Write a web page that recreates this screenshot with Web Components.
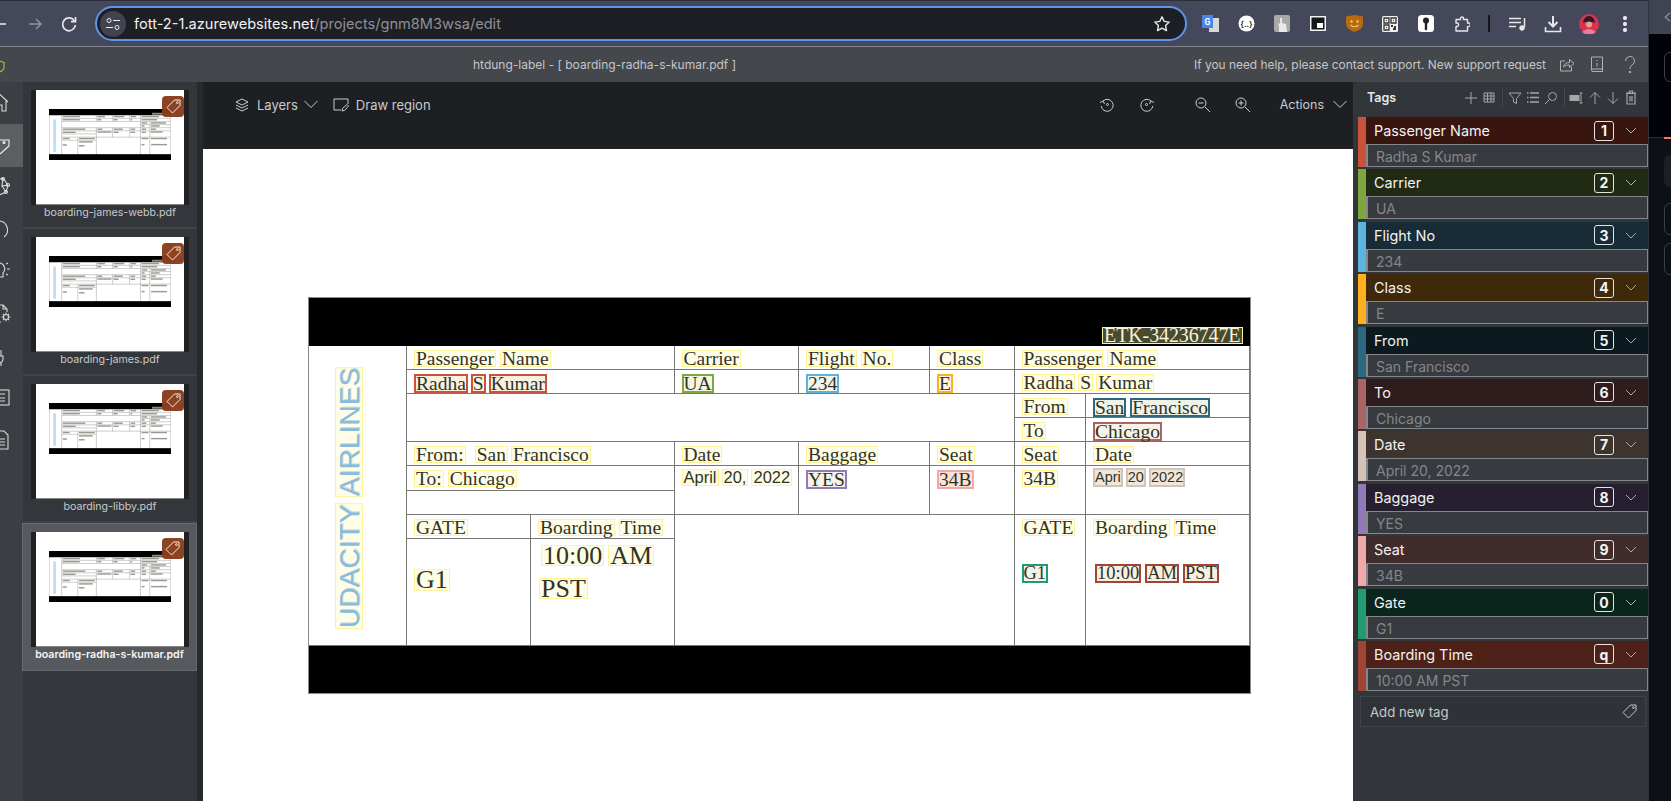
<!DOCTYPE html>
<html>
<head>
<meta charset="utf-8">
<title>fott</title>
<style>
html, body { margin: 0; padding: 0; width: 1671px; height: 801px; overflow: hidden; background: #0d1117; font-family: Inter, "Liberation Sans", sans-serif; }
.root { display: flex; width: 1671px; height: 801px; }
.win { display: flex; flex-direction: column; width: 1648px; flex: none; }
.work { display: flex; height: 719px; }
.thumbs { display: flex; flex-direction: column; width: 174px; background: #33363b; flex: none; }
.strip { width: 6px; background: #26292d; flex: none; }
.main { display: flex; flex-direction: column; width: 1150px; flex: none; }
.canvas { flex: 1; background: #fff; padding: 148px 0 0 105px; overflow: hidden; }
.vert { display: flex; writing-mode: vertical-rl; transform: rotate(180deg); gap: 6px; }
.line { display: flex; gap: 4px; }
.t { font-size: 18.5px; }
</style>
</head>
<body>
<div class="root">
	<div class="win">
		<browser-bar></browser-bar>
		<title-bar></title-bar>
		<div class="work">
			<left-nav></left-nav>
			<div class="thumbs">
				<thumb-card>boarding-james-webb.pdf</thumb-card>
				<thumb-card>boarding-james.pdf</thumb-card>
				<thumb-card>boarding-libby.pdf</thumb-card>
				<thumb-card selected>boarding-radha-s-kumar.pdf</thumb-card>
			</div>
			<div class="strip"></div>
			<div class="main">
				<editor-toolbar></editor-toolbar>
				<div class="canvas">
					<doc-sheet>
						<doc-cell black style="grid-area:1/1/2/9;justify-content:flex-end;padding:29px 7px 0 0"><doc-word style="color:#f4f4d8;background:#4a4a30;font-size:20px;letter-spacing:-.1px">ETK-34236747E</doc-word></doc-cell>
						<doc-cell style="grid-area:2/1/11/2;padding:21px 0 0 26px"><div class="vert" style="font:28.2px/27px 'Liberation Sans',sans-serif;color:#8abbd8;text-shadow:1px 1px 0 #c4dbe6"><doc-word style="--lh:26px;padding:0">UDACITY</doc-word><doc-word style="--lh:26px;padding:0">AIRLINES</doc-word></div></doc-cell>

						<doc-cell style="grid-area:2/2/3/4"><doc-word>Passenger</doc-word><doc-word>Name</doc-word></doc-cell>
						<doc-cell style="grid-area:2/4/3/5"><doc-word>Carrier</doc-word></doc-cell>
						<doc-cell style="grid-area:2/5/3/6"><doc-word>Flight</doc-word><doc-word>No.</doc-word></doc-cell>
						<doc-cell style="grid-area:2/6/3/7"><doc-word>Class</doc-word></doc-cell>
						<doc-cell style="grid-area:2/7/3/9"><doc-word>Passenger</doc-word><doc-word>Name</doc-word></doc-cell>

						<doc-cell style="grid-area:3/2/4/4;gap:3px"><doc-word c="#c9533a">Radha</doc-word><doc-word c="#c9533a">S</doc-word><doc-word c="#c9533a">Kumar</doc-word></doc-cell>
						<doc-cell style="grid-area:3/4/4/5"><doc-word c="#7fa63f">UA</doc-word></doc-cell>
						<doc-cell style="grid-area:3/5/4/6"><doc-word c="#5cb3e0">234</doc-word></doc-cell>
						<doc-cell style="grid-area:3/6/4/7"><doc-word c="#ffb01f">E</doc-word></doc-cell>
						<doc-cell style="grid-area:3/7/4/9;gap:3px"><doc-word>Radha</doc-word><doc-word>S</doc-word><doc-word>Kumar</doc-word></doc-cell>

						<doc-cell style="grid-area:4/2/6/7"></doc-cell>
						<doc-cell style="grid-area:4/7/5/8"><doc-word>From</doc-word></doc-cell>
						<doc-cell style="grid-area:4/8/5/9"><doc-word c="#2c6880">San</doc-word><doc-word c="#2c6880">Francisco</doc-word></doc-cell>
						<doc-cell style="grid-area:5/7/6/8"><doc-word>To</doc-word></doc-cell>
						<doc-cell style="grid-area:5/8/6/9"><doc-word c="#ab6464">Chicago</doc-word></doc-cell>

						<doc-cell style="grid-area:6/2/7/4;gap:3px"><doc-word>From:</doc-word><doc-word style="margin-left:6px">San</doc-word><doc-word>Francisco</doc-word></doc-cell>
						<doc-cell style="grid-area:6/4/7/5"><doc-word>Date</doc-word></doc-cell>
						<doc-cell style="grid-area:6/5/7/6"><doc-word>Baggage</doc-word></doc-cell>
						<doc-cell style="grid-area:6/6/7/7"><doc-word>Seat</doc-word></doc-cell>
						<doc-cell style="grid-area:6/7/7/8"><doc-word>Seat</doc-word></doc-cell>
						<doc-cell style="grid-area:6/8/7/9"><doc-word>Date</doc-word></doc-cell>

						<doc-cell style="grid-area:7/2/8/4"><doc-word>To:</doc-word><doc-word>Chicago</doc-word></doc-cell>
						<doc-cell style="grid-area:8/2/9/4"></doc-cell>
						<doc-cell style="grid-area:7/4/9/5;font:16.5px 'Liberation Sans',sans-serif;padding-top:3px;gap:3px"><doc-word>April</doc-word><doc-word>20,</doc-word><doc-word>2022</doc-word></doc-cell>
						<doc-cell style="grid-area:7/5/9/6"><doc-word c="#9279b8">YES</doc-word></doc-cell>
						<doc-cell style="grid-area:7/6/9/7"><doc-word c="#f0a8a8" style="--mix:30%">34B</doc-word></doc-cell>
						<doc-cell style="grid-area:7/7/9/8"><doc-word>34B</doc-word></doc-cell>
						<doc-cell style="grid-area:7/8/9/9;font:14.5px 'Liberation Sans',sans-serif;padding-top:2px;gap:3px"><doc-word c="#d5c3b8" style="--mix:35%">Apri</doc-word><doc-word c="#d5c3b8" style="--mix:35%">20</doc-word><doc-word c="#d5c3b8" style="--mix:35%">2022</doc-word></doc-cell>

						<doc-cell style="grid-area:9/2/10/3"><doc-word>GATE</doc-word></doc-cell>
						<doc-cell style="grid-area:9/3/10/4"><doc-word>Boarding</doc-word><doc-word>Time</doc-word></doc-cell>
						<doc-cell style="grid-area:10/2/11/3;font-size:26px;padding-top:30px"><doc-word style="--lh:20px">G1</doc-word></doc-cell>
						<doc-cell style="grid-area:10/3/11/4;font-size:26px;flex-wrap:wrap;align-content:flex-start;row-gap:12px;padding:6px 0 0 8px"><doc-word style="--lh:19px;margin-left:2px">10:00</doc-word><doc-word style="--lh:19px">AM</doc-word><doc-word style="--lh:19px">PST</doc-word></doc-cell>
						<doc-cell style="grid-area:9/4/11/7"></doc-cell>
						<doc-cell style="grid-area:9/7/11/8;flex-direction:column;align-items:flex-start;gap:28px"><doc-word>GATE</doc-word><doc-word c="#229a72" class="t">G1</doc-word></doc-cell>
						<doc-cell style="grid-area:9/8/11/9;flex-direction:column;gap:28px">
							<div class="line"><doc-word>Boarding</doc-word><doc-word>Time</doc-word></div>
							<div class="line" style="margin-left:2px"><doc-word c="#9f4535" class="t">10:00</doc-word><doc-word c="#9f4535" class="t">AM</doc-word><doc-word c="#9f4535" class="t">PST</doc-word></div>
						</doc-cell>
						<doc-cell black style="grid-area:11/1/12/9"></doc-cell>
					</doc-sheet>
				</div>
			</div>
			<tag-panel>
				<tag-item color="#c9533a" head="#38150f" key="1" value="Radha S Kumar">Passenger Name</tag-item>
				<tag-item color="#7fa63f" head="#212a12" key="2" value="UA">Carrier</tag-item>
				<tag-item color="#5cb3e0" head="#182c38" key="3" value="234">Flight No</tag-item>
				<tag-item color="#ffb01f" head="#40290b" key="4" value="E">Class</tag-item>
				<tag-item color="#2c6880" head="#0b1a1e" key="5" value="San Francisco">From</tag-item>
				<tag-item color="#ab6464" head="#2f1c1c" key="6" value="Chicago">To</tag-item>
				<tag-item color="#d5c3b8" head="#3d3430" key="7" value="April 20, 2022">Date</tag-item>
				<tag-item color="#9279b8" head="#261f30" key="8" value="YES">Baggage</tag-item>
				<tag-item color="#f0a8a8" head="#412c2c" key="9" value="34B">Seat</tag-item>
				<tag-item color="#229a72" head="#0a261c" key="0" value="G1">Gate</tag-item>
				<tag-item color="#9f4535" head="#4d2018" key="q" value="10:00 AM PST">Boarding Time</tag-item>
			</tag-panel>
		</div>
	</div>
	<side-window></side-window>
</div>

<script>
// small icon helper, all icons are stroke based unless the body says otherwise
const icon = (w, h, body, extra = '') =>
	`<svg width="${w}" height="${h}" viewBox="0 0 ${w} ${h}" fill="none" stroke="currentColor" stroke-width="1" ${extra}>${body}</svg>`

const TAG_SHAPE = '<path d="M3 10.5 10.5 3H16v5.5L8.5 16Z" stroke-linejoin="round"/><circle cx="13.4" cy="5.6" r=".9"/>'

// thumbnail drawing, same coordinates as the real sheet, then scaled
const MINI_BLOBS = [[106,53,134],[105,77,132],[373,53,58],[498,53,82],[629,53,43],[373,77,30],[497,77,32],[628,77,13],[713,53,135],[713,77,120],[713,102,45],[786,102,115],[713,125,23],[785,125,68],[106,150,174],[106,174,100],[373,150,38],[498,150,71],[629,150,35],[714,150,35],[785,150,38],[373,172,108],[497,174,39],[628,174,35],[714,174,32],[785,172,90],[106,222,53],[231,222,122],[106,272,32],[232,248,105],[231,278,43],[713,222,54],[785,222,124],[713,269,23],[787,269,123]]
const MINI_LINES = ['98 72H940','98 96H940','705 120H940','98 144H940','98 168H940','98 192H365','98 217H940','98 241H365','98 48V348','365 48V96','365 144V348','490 48V96','490 144V217','621 48V96','621 144V217','705 48V348','777 96V348','222 217V348']
const MINI_DOC = `<svg viewBox="0 0 940 396" width="122" height="51.4" style="display:block">
	<rect x="1" y="1" width="938" height="394" fill="#fff" stroke="#aaa" stroke-width="4"/>
	<path d="${MINI_LINES.map(l => 'M' + l).join('')}" stroke="#a0a0a0" stroke-width="4"/>
	${MINI_BLOBS.map(b => `<rect x="${b[0]}" y="${b[1]}" width="${b[2]}" height="11" fill="#9a9a90"/>`).join('')}
	<rect x="34" y="80" width="18" height="250" fill="#b5d8ee"/>
	<rect width="940" height="48" fill="#000"/><rect y="348" width="940" height="48" fill="#000"/>
	<rect x="793" y="29" width="140" height="15" fill="#8a8a78"/>
</svg>`

class BrowserBar extends HTMLElement {
	constructor() {
		super()
		this.attachShadow({ mode: 'open' })
		this.shadowRoot.innerHTML = `
			<style>
				:host { display: flex; align-items: center; height: 47px; box-sizing: border-box; background: #45485a; border-top: 1px solid #2b2d38; border-bottom: 1px solid #82848c; color: #e6e7ea; flex: none; }
				.back { width: 6px; overflow: hidden; flex: none; display: flex; }
				.fwd { margin-left: 21px; color: #8f919c; display: flex; }
				.reload { margin-left: 17px; display: flex; }
				.omni { display: flex; align-items: center; box-sizing: border-box; width: 1092px; height: 35px; margin-left: 17px; border: 2px solid #5f94e6; border-radius: 18px; background: #1e1f24; padding: 0 14px 0 3px; flex: none; }
				.site { width: 26px; height: 26px; border-radius: 50%; background: #41434f; display: flex; align-items: center; justify-content: center; flex: none; color: #eee; }
				.url { margin-left: 8px; font-size: 14.6px; color: #f0f0f2; flex: 1; white-space: nowrap; }
				.url span { color: #8f9096; }
				.star { display: flex; }
				.exts { display: flex; margin-left: 5px; }
				.e { width: 36px; height: 24px; display: flex; align-items: center; justify-content: center; flex: none; }
				.sep { width: 2px; height: 17px; background: #15161c; margin: 0 9px 0 8px; flex: none; }
			</style>
			<div class="back">${icon(6, 16, '<path d="M0 8H6" stroke-width="1.6"/>')}</div>
			<div class="fwd">${icon(16, 16, '<path d="M2 8H14M9 3l5 5-5 5" stroke-width="1.5"/>')}</div>
			<div class="reload">${icon(18, 18, '<path d="M14.5 6A6.4 6.4 0 1 0 15.4 10" stroke-width="1.7"/><path d="M15.5 2v4.6H11" stroke-width="1.7"/>')}</div>
			<div class="omni">
				<div class="site">${icon(16, 14, '<circle cx="4" cy="3.5" r="2"/><path d="M8 3.5H15M1 10.5H8"/><circle cx="12" cy="10.5" r="2"/>', 'stroke-width="1.4"')}</div>
				<div class="url">fott-2-1.azurewebsites.net<span>/projects/gnm8M3wsa/edit</span></div>
				<div class="star">${icon(18, 18, '<path d="M9 1.8l2.2 4.6 5 .7-3.6 3.5.9 5L9 13.2l-4.5 2.4.9-5L1.800 7.100l5-.7Z" stroke-width="1.4" stroke-linejoin="round"/>')}</div>
			</div>
			<div class="exts">
				<div class="e"><svg width="17" height="17" viewBox="0 0 17 17"><rect x="7" y="3" width="10" height="14" fill="#d8d8d8"/><rect x="0" y="0" width="11" height="13" fill="#4a86e8"/><text x="5.500" y="9.500" font-family="Roboto,sans-serif" font-size="8.500" font-weight="700" fill="#fff" text-anchor="middle">G</text></svg></div>
				<div class="e"><svg width="17" height="17" viewBox="0 0 17 17"><circle cx="8.500" cy="8.500" r="8" fill="#fff"/><text x="8.500" y="11.500" font-family="Inter,sans-serif" font-size="8" font-weight="600" fill="#222" text-anchor="middle">{..}</text></svg></div>
				<div class="e"><svg width="16" height="17" viewBox="0 0 16 17"><rect width="16" height="17" rx="2" fill="#a8a8a8"/><path d="M5 17V12L4 8l2 1V3h2v5l4 1 1 8Z" fill="#e8e8e8"/></svg></div>
				<div class="e"><svg width="16" height="15" viewBox="0 0 16 15"><rect x=".75" y=".75" width="14.500" height="13.500" fill="#15161a" stroke="#f2f2f2" stroke-width="1.500"/><rect x="7" y="7" width="6" height="5" fill="#fff"/></svg></div>
				<div class="e"><svg width="17" height="17" viewBox="0 0 17 17"><path d="M0 1.500 8.500 0 17 1.500V9c0 3.500-3.500 6.500-8.500 8C3.500 15.500 0 12.500 0 9Z" fill="#b86a12"/><circle cx="5.500" cy="6.500" r="1.200" fill="#f6c96a"/><circle cx="11.500" cy="6.500" r="1.200" fill="#f6c96a"/><path d="M4.500 10q4 3.500 8 0" stroke="#f6c96a" stroke-width="1.200" fill="none"/></svg></div>
				<div class="e"><svg width="16" height="16" viewBox="0 0 16 16"><rect width="16" height="16" rx="1.500" fill="#f0f0f0"/><path d="M2 2h5v5H2ZM9 2h5v5H9ZM2 9h5v5H2Z" fill="none" stroke="#333" stroke-width="1.300"/><path d="M4 4h1v1H4ZM11 4h1v1h-1ZM4 11h1v1H4ZM9 9h2v2H9ZM12 10h2v4h-3v-2h1Z" fill="#333"/></svg></div>
				<div class="e"><svg width="16" height="17" viewBox="0 0 16 17"><rect width="16" height="17" rx="3.500" fill="#fff"/><circle cx="8" cy="5.500" r="3" fill="#222"/><path d="M6.800 7h2.400v7.500L8 15.500l-1.200-1Z" fill="#222"/></svg></div>
				<div class="e">${icon(16, 16, '<path d="M2 3.500H6.500V2.500a1.500 1.500 0 0 1 3 0V3.500H13.500V7h1a1.800 1.800 0 0 1 0 3.600h-1V15H2V10.500h1.200a1.800 1.800 0 0 0 0-3.500H2Z" stroke-width="1.400" stroke-linejoin="round"/>')}</div>
			</div>
			<div class="sep"></div>
			<div class="e" style="width:36px">${icon(17, 14, '<path d="M0 1.500H12M0 5.500H12M0 9.500H7" stroke-width="1.500"/><path d="M15.500 1V10" stroke-width="1.500"/><circle cx="13" cy="11" r="2.300" fill="currentColor"/>')}</div>
			<div class="e" style="width:36px">${icon(18, 18, '<path d="M9 1V11M4.500 7 9 11.500 13.500 7" stroke-width="2"/><path d="M1.500 12V16.500H16.500V12" stroke-width="1.600"/>')}</div>
			<div class="e" style="width:36px"><svg width="20" height="20" viewBox="0 0 20 20"><circle cx="10" cy="10" r="10" fill="#d8334f"/><path d="M4 9Q5 2 10 2T16 9L14 8H6Z" fill="#2a1a28"/><circle cx="10" cy="10.500" r="3" fill="#e8a090"/><path d="M3 18q7-6 14 0l-3 2H6Z" fill="#f07a9a"/></svg></div>
			<div class="e" style="width:36px">${icon(4, 16, '<circle cx="2" cy="2" r="1.700" fill="currentColor"/><circle cx="2" cy="8" r="1.700" fill="currentColor"/><circle cx="2" cy="14" r="1.700" fill="currentColor"/>', 'stroke="none"')}</div>
		`
	}
}
customElements.define('browser-bar', BrowserBar)

class TitleBar extends HTMLElement {
	constructor() {
		super()
		this.attachShadow({ mode: 'open' })
		this.shadowRoot.innerHTML = `
			<style>
				:host { display: flex; align-items: center; height: 35px; background: #44474c; color: #c4c6c8; font-size: 12px; flex: none; position: relative; }
				.shield { position: absolute; left: -6px; top: 13px; color: #8fc31f; }
				.name { margin-left: 473px; }
				.help { margin-left: auto; font-size: 11.900px; }
				.i { display: flex; color: #b0b2b4; }
			</style>
			<div class="shield">${icon(11, 13, '<path d="M5.500 1 10 2.500V7c0 2.500-2 4-4.500 5C3 11 1 9.500 1 7V2.500Z" stroke-width="1.300"/>')}</div>
			<div class="name">htdung-label - [ boarding-radha-s-kumar.pdf ]</div>
			<div class="help">If you need help, please contact support. New support request</div>
			<div class="i" style="margin-left:13px">${icon(16, 15, '<path d="M6 4H1.500V14H12.500V10" /><path d="M4.500 10C5 7 7.500 5.500 10.500 5.500V2.500L15 6.500 10.500 10.500V8C8 8 6 8.500 4.500 10Z" stroke-linejoin="round"/>')}</div>
			<div class="i" style="margin-left:15px">${icon(14, 17, '<path d="M1.500 13.500V1H12.500V15.500H3A1.500 1.500 0 0 1 1.500 14Q1.500 13 3 13H12.500"/><path d="M7 4V5M7 7V10.500"/>')}</div>
			<div class="i" style="margin-left:20px;margin-right:12px">${icon(12, 18, '<path d="M1.500 5A4.500 4.500 0 1 1 8 9Q6 10 6 13"/><circle cx="6" cy="16" r=".8" fill="currentColor"/>')}</div>
		`
	}
}
customElements.define('title-bar', TitleBar)

class LeftNav extends HTMLElement {
	constructor() {
		super()
		this.attachShadow({ mode: 'open' })
		// the page is scrolled sideways in the shot, so only the right part of each icon shows
		const items = [
			'<path d="M-8 11 0 3.500 8 11M6 10V20H2V14H-2V20"/>',
			'<path d="M-8 6H9V12L0 20"/><circle cx="4" cy="8.500" r="1"/>',
			'<path d="M-3 4 3 2 8 9 6 16 -3 20M3 2 2 10 8 9M2 10 6 16" /><circle cx="3" cy="3" r="1.500"/><circle cx="8" cy="9" r="1.500"/><circle cx="6" cy="16" r="1.500"/>',
			'<path d="M0 3A9 9 0 0 1 4 19"/>',
			'<path d="M0 3A6 6 0 0 1 3 13V17H0M6 4 8 3M7 9H10M6 14 8 15"/>',
			'<path d="M-3 3H3L7 7V10M7 7H3V3M-3 3V20H1"/><circle cx="6" cy="15" r="2.500"/><path d="M6 10.500V12M6 18V19.500M10.500 15H9M3 15H1.500M9 12 8 13M4 17 3 18M9 18 8 17M4 13 3 12"/>',
			'<path d="M-5 12H3V15A4 4 0 0 1 -1 19M1 6V12M1 19V22" />',
			'<rect x="-8" y="4" width="17" height="15"/><path d="M-2 8H5M-2 12H5M-2 15H5"/>',
			'<path d="M-6 3H4L8 7V21H-6ZM-2 11H5M-2 14H5M-2 17H5"/>'
		]
		this.shadowRoot.innerHTML = `
			<style>
				:host { display: flex; flex-direction: column; width: 23px; background: #3b3e42; color: #d8dadc; flex: none; }
				.n { height: 42px; display: flex; align-items: center; }
				.n.on { background: #5c5e62; color: #f2f2f2; height: 43px; }
				svg { overflow: hidden; }
			</style>
			${items.map((d, i) => `<div class="n${i == 1 ? ' on' : ''}"><svg width="23" height="24" viewBox="0 0 23 24" fill="none" stroke="currentColor" stroke-width="1.100">${d}</svg></div>`).join('')}
		`
	}
}
customElements.define('left-nav', LeftNav)

class ThumbCard extends HTMLElement {
	constructor() {
		super()
		this.attachShadow({ mode: 'open' })
		this.shadowRoot.innerHTML = `
			<style>
				:host { display: flex; flex-direction: column; align-items: center; box-sizing: border-box; height: 147px; padding-top: 8px; border-bottom: 2px solid #404347; color: #c8cacc; font-size: 10.650px; flex: none; }
				:host([selected]) { background: #56595d; border: 1px solid #66696d; color: #f4f4f4; font-weight: 600; height: 148px; margin-left: -1px; }
				.frame { position: relative; box-sizing: border-box; width: 158px; height: 115px; background: #1f2123; padding: 0 5px; flex: none; }
				.page { height: 115px; background: #fff; padding: 19px 0 0 13px; box-sizing: border-box; border-bottom: 1px solid #888; }
				.badge { position: absolute; right: 5px; top: 6px; width: 22px; height: 21px; border-radius: 4px; background: #8a3c1a; color: #f4eee8; display: flex; align-items: center; justify-content: center; opacity: .97; }
				.label { line-height: 16px; white-space: nowrap; }
			</style>
			<div class="frame">
				<div class="page">${MINI_DOC}</div>
				<div class="badge">${icon(19, 19, TAG_SHAPE)}</div>
			</div>
			<div class="label"><slot></slot></div>
		`
	}
}
customElements.define('thumb-card', ThumbCard)

class EditorToolbar extends HTMLElement {
	constructor() {
		super()
		this.attachShadow({ mode: 'open' })
		const chev = icon(16, 9, '<path d="M1.500 1 8 7.500 14.500 1"/>')
		this.shadowRoot.innerHTML = `
			<style>
				:host { display: flex; height: 67px; padding: 6px 0 0 32px; box-sizing: border-box; background: #1d1f23; color: #c9cbcd; font-size: 13px; flex: none; }
				.r { display: flex; align-items: center; height: 33px; }
				.i { display: flex; }
			</style>
			<div class="r" style="flex:1">
				<div class="i">${icon(14, 14, '<path d="M7 1 13 4 7 7 1 4ZM1 7l6 3 6-3M1 10l6 3 6-3" stroke-linejoin="round"/>')}</div>
				<span style="margin-left:8px">Layers</span>
				<div class="i" style="margin-left:5px">${chev}</div>
				<div class="i" style="margin-left:14px">${icon(16, 14, '<path d="M8 12H1V1H15V6"/><path d="M9 13 9.500 10.500 14 6.500 15.500 8 11.500 12.500Z" stroke-linejoin="round"/>')}</div>
				<span style="margin-left:7px">Draw region</span>
			</div>
			<div class="r">
				<div class="i">${icon(16, 15, '<path d="M4 4A6 6 0 1 1 2.200 9"/><path d="M1 5.500 4 4 5.500 7" /><circle cx="8.500" cy="7.500" r="1"/>')}</div>
				<div class="i" style="margin-left:24px">${icon(16, 15, '<path d="M12 4A6 6 0 1 0 13.800 9"/><path d="M15 5.500 12 4 10.500 7"/><circle cx="7.500" cy="7.500" r="1"/>')}</div>
				<div class="i" style="margin-left:40px">${icon(16, 16, '<circle cx="6" cy="6" r="5"/><path d="M10 10 15 15M3.500 6H8.500"/>')}</div>
				<div class="i" style="margin-left:24px">${icon(16, 16, '<circle cx="6" cy="6" r="5"/><path d="M10 10 15 15M3.500 6H8.500M6 3.500V8.500"/>')}</div>
				<span style="margin-left:29px;font-size:12.500px">Actions</span>
				<div class="i" style="margin-left:8px;margin-right:5px">${chev}</div>
			</div>
		`
	}
}
customElements.define('editor-toolbar', EditorToolbar)

class DocSheet extends HTMLElement {
	constructor() {
		super()
		this.attachShadow({ mode: 'open' })
		this.shadowRoot.innerHTML = `
			<style>
				:host { display: grid; width: 940.500px; border: 1px solid #8a8a8a;
					grid-template-columns: 98px 124px 143.500px 124.500px 131px 84.500px 71.500px 163.500px;
					grid-template-rows: 48px 24px 24px 24px 24px 24px 24.500px 24.500px 24px 106.500px 47.500px;
					font: 19.500px "Liberation Serif", serif; color: #33331f; background: #fff; }
			</style>
			<slot></slot>
		`
	}
}
customElements.define('doc-sheet', DocSheet)

class DocCell extends HTMLElement {
	constructor() {
		super()
		this.attachShadow({ mode: 'open' })
		this.shadowRoot.innerHTML = `
			<style>
				:host { display: flex; align-items: flex-start; gap: 4px; box-sizing: border-box; min-width: 0; padding: 4px 0 0 7px; border-right: 1.500px solid #777; border-bottom: 1.500px solid #777; }
				:host([black]) { background: #000; border: 0; }
			</style>
			<slot></slot>
		`
	}
}
customElements.define('doc-cell', DocCell)

class DocWord extends HTMLElement {
	constructor() {
		super()
		this.attachShadow({ mode: 'open' })
		this.shadowRoot.innerHTML = `
			<style>
				:host { display: inline-block; box-sizing: border-box; flex: none; white-space: nowrap; line-height: var(--lh, 15px); padding: 0 1px; border: 1px solid #fff39a; background: #fefde8; }
				:host([c]) { border: 2px solid var(--c); padding: 0; background: color-mix(in srgb, var(--c) var(--mix, 6%), #fbfbee); }
			</style>
			<slot></slot>
		`
	}
	connectedCallback() {
		const c = this.getAttribute('c')
		if (c) this.style.setProperty('--c', c)
	}
}
customElements.define('doc-word', DocWord)

class TagPanel extends HTMLElement {
	constructor() {
		super()
		this.attachShadow({ mode: 'open' })
		this.shadowRoot.innerHTML = `
			<style>
				:host { display: flex; flex-direction: column; width: 295px; box-sizing: border-box; padding-left: 5px; background: #32353a; border-left: 0; color: #e8e9ea; flex: none; }
				.head { display: flex; align-items: center; height: 35px; padding: 0 8px 4px 9px; box-sizing: border-box; flex: none; }
				.head b { font-size: 12.500px; font-weight: 600; flex: 1; }
				.i { display: flex; color: #a4a6a9; width: 18px; justify-content: center; }
				.s { width: 1px; height: 19px; background: #45484c; margin: 0 3.500px; }
				.add { display: flex; align-items: center; justify-content: space-between; box-sizing: border-box; height: 31px; margin: 3px 2px 0 2px; padding: 0 6px 0 9px; border: 1px solid #3f4246; background: #2f3237; font-size: 13.200px; color: #c8cacc; }
			</style>
			<div class="head">
				<b>Tags</b>
				<div class="i">${icon(14, 14, '<path d="M7 1V13M1 7H13"/>')}</div>
				<div class="i">${icon(13, 13, '<path d="M1 2H11V11H1ZM1 5H11M1 8H11M4.500 2V11M8 2V11"/>')}</div>
				<div class="s"></div>
				<div class="i">${icon(14, 14, '<path d="M1 2H13L8.500 7.500V12.500L5.500 11V7.500Z"/>')}</div>
				<div class="i">${icon(14, 13, '<path d="M4 2H13M4 6.500H13M4 11H13M1 2H2.500M1 6.500H2.500M1 11H2.500" stroke-width="1.500"/>')}</div>
				<div class="i">${icon(14, 14, '<circle cx="8.500" cy="5.500" r="4"/><path d="M5.500 8.500 1 13"/>')}</div>
				<div class="s"></div>
				<div class="i">${icon(16, 12, '<rect x="1" y="3.500" width="9" height="5" fill="currentColor"/><path d="M12 1V11M10.500 1H13.500M10.500 11H13.500"/>')}</div>
				<div class="i">${icon(14, 14, '<path d="M7 13V1.500M2 6.500 7 1.500 12 6.500"/>')}</div>
				<div class="i">${icon(14, 14, '<path d="M7 1V12.500M2 7.500 7 12.500 12 7.500"/>')}</div>
				<div class="i">${icon(12, 15, '<path d="M2 3.500H10V14H2ZM1 3H11M4.500 3V1H7.500V3M5 6V11.500M7 6V11.500" stroke-width="1.200"/>')}</div>
			</div>
			<slot></slot>
			<div class="add"><span>Add new tag</span>${icon(19, 19, TAG_SHAPE)}</div>
		`
	}
}
customElements.define('tag-panel', TagPanel)

class TagItem extends HTMLElement {
	constructor() {
		super()
		this.attachShadow({ mode: 'open' })
	}
	connectedCallback() {
		const color = this.getAttribute('color')
		const head = this.getAttribute('head')
		this.shadowRoot.innerHTML = `
			<style>
				:host { display: grid; grid-template-columns: 8px 1fr; grid-template-rows: 27px 23px; height: 50px; margin-bottom: 2.400px; flex: none; }
				.bar { grid-row: 1 / 3; background: ${color}; }
				.top { display: flex; align-items: center; padding: 0 11px 0 8px; background: ${head}; color: #f2f2f2; font-size: 14.400px; }
				.name { flex: 1; }
				.key { box-sizing: border-box; width: 20px; height: 20px; display: flex; align-items: center; justify-content: center; border: 1.500px solid #e4e4e4; border-radius: 3px; font-size: 14px; font-weight: 700; color: #f4f4f4; }
				.chev { display: flex; margin-left: 11px; color: #a8aaac; }
				.val { box-sizing: border-box; padding-left: 8px; background: #373a3f; border: 1px solid #85878a; border-left-width: 2px; font-size: 14px; line-height: 23.500px; color: #84878a; overflow: hidden; }
			</style>
			<div class="bar"></div>
			<div class="top">
				<div class="name"><slot></slot></div>
				<div class="key">${this.getAttribute('key')}</div>
				<div class="chev">${icon(12, 7, '<path d="M1 1 6 6 11 1"/>')}</div>
			</div>
			<div class="val">${this.getAttribute('value')}</div>
		`
	}
}
customElements.define('tag-item', TagItem)

class SideWindow extends HTMLElement {
	constructor() {
		super()
		this.attachShadow({ mode: 'open' })
		this.shadowRoot.innerHTML = `
			<style>
				:host { display: flex; flex-direction: column; width: 23px; background: #0d1117; border-left: 1px solid #30333a; box-sizing: border-box; flex: none; }
				.bar { height: 34px; background: #3f4354; color: #8e919e; display: flex; align-items: center; padding-left: 15px; box-sizing: border-box; flex: none; }
				.dark { height: 104px; background: #02030a; padding: 18px 0 0 15px; box-sizing: border-box; flex: none; border-bottom: 1.500px solid #2b2e35; position: relative; }
				.accent { position: absolute; right: 0; bottom: -1.500px; width: 7px; height: 1.500px; background: #f07a5a; }
				.b { width: 30px; height: 30px; border: 1px solid #3a3f46; border-radius: 6px; box-sizing: border-box; flex: none; }
				.rest { padding: 17px 0 0 15px; display: flex; flex-direction: column; gap: 8px; }
			</style>
			<div class="bar">${icon(8, 12, '<path d="M7 1 1.500 6 7 11" stroke-width="1.500"/>')}</div>
			<div class="dark"><div class="b"></div><div class="accent"></div></div>
			<div class="rest">
				<div class="b" style="background:#1c2026;border:0;height:32px;margin-bottom:8px"></div>
				<div class="b" style="height:32px"></div>
				<div class="b" style="height:32px"></div>
			</div>
		`
	}
}
customElements.define('side-window', SideWindow)
</script>
</body>
</html>
